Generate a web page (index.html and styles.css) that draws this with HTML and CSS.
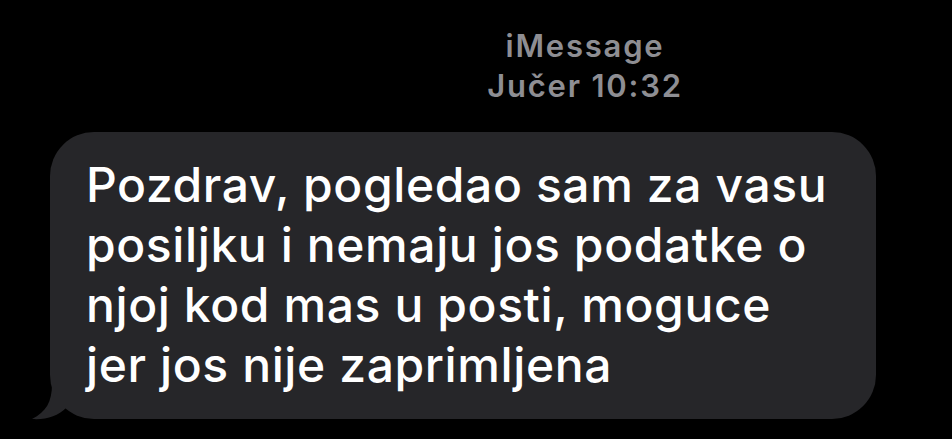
FILE: index.html
```html
<!DOCTYPE html>
<html lang="hr">
<head>
    <meta charset="UTF-8">
    <meta name="viewport" content="width=device-width, initial-scale=1.0">
    <title>iMessage</title>
    <link rel="stylesheet" href="styles.css">
</head>
<body>
    <div class="thread">
        <div class="meta">
            <div class="service">iMessage</div>
            <div class="time">Jučer 10:32</div>
        </div>

        <!-- Received message -->
        <div class="bubble">
            <p>Pozdrav, pogledao sam za vasu posiljku i nemaju jos podatke o njoj kod mas u posti, moguce jer jos nije zaprimljena</p>
            <svg class="tail" width="40" height="44" viewBox="0 0 40 44">
                <path d="M20 0 L20 8 C20 26 14 36 0 43 C14 44 26 40 34 32 L40 36 L40 0 Z"></path>
            </svg>
        </div>
    </div>
</body>
</html>
```

FILE: styles.css
```css
/* Basic Reset */
* {
    margin: 0;
    padding: 0;
    box-sizing: border-box;
}

body {
    font-family: Inter, 'Liberation Sans', sans-serif;
    background-color: #000;
    min-height: 100vh;
}

.thread {
    padding-top: 26px;
}

/* Header above the message */
.meta {
    padding-left: 218px;
    text-align: center;
    color: #8e8e93;
    font-size: 31px;
    font-weight: 600;
    line-height: 40px;
    letter-spacing: 1.8px;
}

.bubble {
    position: relative;
    margin: 26px 0 0 50px;
    width: 826px;
    padding: 23px 40px 24px 36px;
    background-color: #262629;
    border-radius: 44px;
}

.bubble p {
    color: #fff;
    font-size: 48px;
    font-weight: 500;
    line-height: 60px;
    letter-spacing: 0.6px;
}

.tail {
    position: absolute;
    left: -18px;
    bottom: -1px;
    fill: #262629;
}
```
